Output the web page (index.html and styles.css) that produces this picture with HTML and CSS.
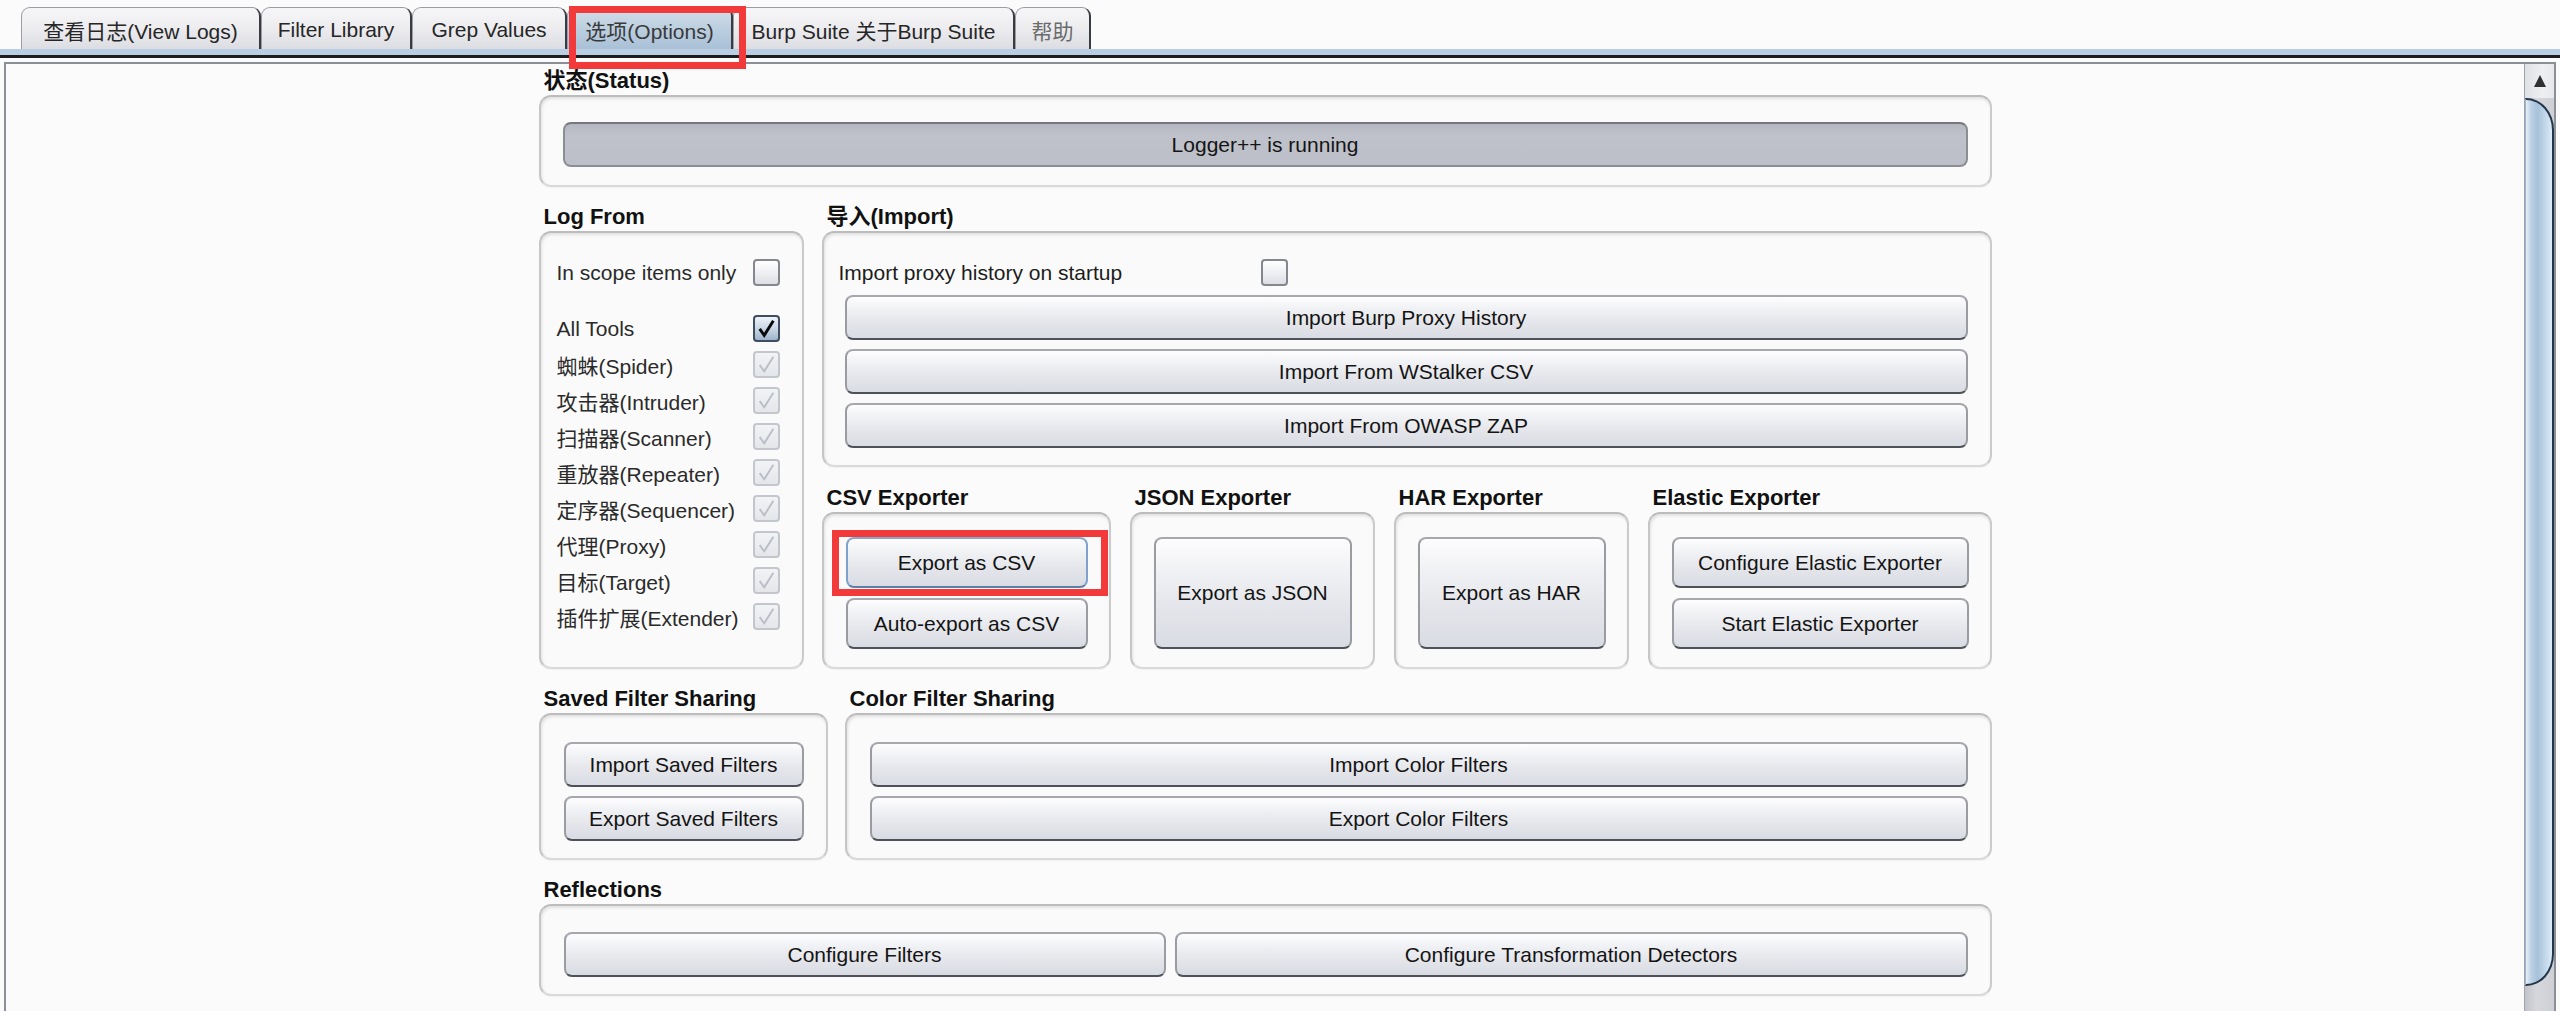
FILE: index.html
```html
<!DOCTYPE html>
<html lang="zh">
<head>
<meta charset="utf-8">
<title>Logger++ Options</title>
<link rel="stylesheet" href="styles.css">
</head>
<body>
<div class="tabbar">
  <div class="tab t1">查看日志(View Logs)</div>
  <div class="tab t2">Filter Library</div>
  <div class="tab t3">Grep Values</div>
  <div class="tab t4 selected">选项(Options)<span class="mark mark-tab"></span></div>
  <div class="tab t5">Burp Suite 关于Burp Suite</div>
  <div class="tab t6">帮助</div>
</div>
<div class="tabline"></div>
<div class="panel">
  <div class="main">
    <div class="layout">
      <section class="group">
        <div class="title">状态(Status)</div>
        <div class="box status-box"><div class="status-bar">Logger++ is running</div></div>
      </section>

      <div class="row2">
        <section class="group logfrom">
          <div class="title">Log From</div>
          <div class="box logfrom-box">
            <div class="opt scope"><span>In scope items only</span><span class="cb"></span></div>
            <div class="opt"><span>All Tools</span><span class="cb checked"><svg viewBox="0 0 23 23"><polyline points="4,12 9,19 19,3"/></svg></span></div>
            <div class="opt"><span>蜘蛛(Spider)</span><span class="cb disabled"><svg viewBox="0 0 23 23"><polyline points="4,12 9,19 19,3"/></svg></span></div>
            <div class="opt"><span>攻击器(Intruder)</span><span class="cb disabled"><svg viewBox="0 0 23 23"><polyline points="4,12 9,19 19,3"/></svg></span></div>
            <div class="opt"><span>扫描器(Scanner)</span><span class="cb disabled"><svg viewBox="0 0 23 23"><polyline points="4,12 9,19 19,3"/></svg></span></div>
            <div class="opt"><span>重放器(Repeater)</span><span class="cb disabled"><svg viewBox="0 0 23 23"><polyline points="4,12 9,19 19,3"/></svg></span></div>
            <div class="opt"><span>定序器(Sequencer)</span><span class="cb disabled"><svg viewBox="0 0 23 23"><polyline points="4,12 9,19 19,3"/></svg></span></div>
            <div class="opt"><span>代理(Proxy)</span><span class="cb disabled"><svg viewBox="0 0 23 23"><polyline points="4,12 9,19 19,3"/></svg></span></div>
            <div class="opt"><span>目标(Target)</span><span class="cb disabled"><svg viewBox="0 0 23 23"><polyline points="4,12 9,19 19,3"/></svg></span></div>
            <div class="opt"><span>插件扩展(Extender)</span><span class="cb disabled"><svg viewBox="0 0 23 23"><polyline points="4,12 9,19 19,3"/></svg></span></div>
          </div>
        </section>

        <div class="rightcol">
          <section class="group">
            <div class="title">导入(Import)</div>
            <div class="box import-box">
              <div class="check-row"><span class="check-label">Import proxy history on startup</span><span class="cb"></span></div>
              <div class="btn">Import Burp Proxy History</div>
              <div class="btn">Import From WStalker CSV</div>
              <div class="btn">Import From OWASP ZAP</div>
            </div>
          </section>

          <div class="exporters">
            <section class="group">
              <div class="title">CSV Exporter</div>
              <div class="box exp-box">
                <div class="btn tall focused">Export as CSV<span class="mark mark-btn"></span></div>
                <div class="btn tall">Auto-export as CSV</div>
              </div>
            </section>
            <section class="group">
              <div class="title">JSON Exporter</div>
              <div class="box exp-box"><div class="btn fill">Export as JSON</div></div>
            </section>
            <section class="group">
              <div class="title">HAR Exporter</div>
              <div class="box exp-box"><div class="btn fill">Export as HAR</div></div>
            </section>
            <section class="group">
              <div class="title">Elastic Exporter</div>
              <div class="box exp-box">
                <div class="btn tall">Configure Elastic Exporter</div>
                <div class="btn tall">Start Elastic Exporter</div>
              </div>
            </section>
          </div>
        </div>
      </div>

      <div class="row3">
        <section class="group">
          <div class="title">Saved Filter Sharing</div>
          <div class="box share-box">
            <div class="btn">Import Saved Filters</div>
            <div class="btn">Export Saved Filters</div>
          </div>
        </section>
        <section class="group">
          <div class="title">Color Filter Sharing</div>
          <div class="box share-box">
            <div class="btn">Import Color Filters</div>
            <div class="btn">Export Color Filters</div>
          </div>
        </section>
      </div>

      <section class="group">
        <div class="title">Reflections</div>
        <div class="box refl-box">
          <div class="btn">Configure Filters</div>
          <div class="btn">Configure Transformation Detectors</div>
        </div>
      </section>
    </div>
  </div>
  <div class="scrollbar">
    <div class="sb-up"></div>
    <div class="sb-thumb"></div>
  </div>
</div>
</body>
</html>
```

FILE: styles.css
```css
html, body {
  margin: 0;
  padding: 0;
}
body {
  width: 2560px;
  height: 1011px;
  overflow: hidden;
  background: #fbfbfb;
  font-family: "Liberation Sans", "Noto Sans CJK SC", sans-serif;
  font-size: 21px;
  color: #1c1c1c;
  display: flex;
  flex-direction: column;
}

/* ---------- tabs ---------- */
.tabbar {
  display: flex;
  padding: 7px 0 0 21px;
  height: 42px;
  flex: none;
}
.tab {
  position: relative;
  box-sizing: border-box;
  height: 42px;
  padding-top: 3px;
  display: flex;
  align-items: center;
  justify-content: center;
  white-space: nowrap;
  border: 1px solid #9c9da3;
  border-bottom: none;
  border-right: 2px solid #3a3b40;
  border-radius: 9px 9px 0 0;
  background: linear-gradient(180deg, #f6f6f8 0%, #eeeef1 45%, #dcdde2 100%);
  color: #262626;
}
.t1 { width: 240px; }
.t2 { width: 151px; }
.t3 { width: 155px; }
.t4 { width: 166px; }
.t5 { width: 282px; }
.t6 { width: 76px; color: #6a6a6a; }
.tab.selected {
  background: linear-gradient(180deg, #d3dee9 0%, #bccfe0 50%, #a9c0d6 100%);
  border-color: #8fa3b8;
  border-right: 2px solid #3a3b40;
  color: #3a3a3a;
}
.tabline {
  flex: none;
  height: 6px;
  background: #b9cee2;
  border-bottom: 3px solid #1d1d1f;
}

/* annotation overlays */
.mark {
  position: absolute;
  box-sizing: border-box;
  border: 7px solid #f23a3a;
  z-index: 10;
  pointer-events: none;
}
.mark-tab {
  left: 1px;
  top: -2px;
  width: 177px;
  height: 63px;
}
.mark-btn {
  left: -16px;
  top: -9px;
  right: -22px;
  bottom: -10px;
}

/* ---------- panel ---------- */
.panel {
  flex: 1;
  display: flex;
  margin: 4px 4px 0 4px;
  border: 2px solid #8d8f97;
  border-bottom: none;
  background: #fbfbfb;
  min-height: 0;
}
.main {
  flex: 1;
  display: flex;
  justify-content: center;
}
.layout {
  width: 1453px;
  padding-top: 1px;
  display: flex;
  flex-direction: column;
  gap: 14px;
}

.group {
  display: flex;
  flex-direction: column;
}
.title {
  height: 30px;
  line-height: 32px;
  font-weight: bold;
  font-size: 22px;
  padding-left: 5px;
  color: #111;
  white-space: nowrap;
}
.box {
  box-sizing: border-box;
  border: 2px solid #cacaca;
  border-color: #bcbcbc #cbcbcb #dadada #c6c6c6;
  border-radius: 12px;
  background: #fafafa;
  box-shadow: inset 1px 2px 3px rgba(0, 0, 0, 0.10), 0 1px 1px rgba(0, 0, 0, 0.04);
}

/* status */
.status-box {
  padding: 25px 22px 18px 22px;
}
.status-bar {
  box-sizing: border-box;
  height: 45px;
  border: 2px solid #8c8e95;
  border-top-color: #76787e;
  border-radius: 8px;
  background: linear-gradient(180deg, #b5b8c0 0%, #bfc2ca 30%, #bcbfc7 100%);
  display: flex;
  align-items: center;
  justify-content: center;
  color: #151515;
}

/* row 2 */
.row2 {
  display: flex;
  gap: 18px;
}
.logfrom {
  width: 265px;
  flex: none;
}
.logfrom-box {
  flex: 1;
  padding: 26px 22px 0 16px;
  display: flex;
  flex-direction: column;
  gap: 9px;
}
.opt {
  height: 27px;
  display: flex;
  align-items: center;
  justify-content: space-between;
  white-space: nowrap;
  color: #2a2a2a;
}
.opt.scope {
  margin-bottom: 20px;
}

.cb {
  box-sizing: border-box;
  width: 27px;
  height: 27px;
  flex: none;
  border: 2px solid #85878e;
  border-radius: 4px;
  background: linear-gradient(180deg, #ffffff 0%, #eff0f3 50%, #dcdee4 100%);
  display: flex;
  align-items: center;
  justify-content: center;
}
.cb svg {
  width: 21px;
  height: 21px;
}
.cb polyline {
  fill: none;
  stroke-width: 3.2;
  stroke-linecap: butt;
  stroke-linejoin: miter;
}
.cb.checked {
  border-color: #3e4e60;
  background: linear-gradient(180deg, #eef3f8 0%, #c9d7e5 50%, #9fb5ca 100%);
}
.cb.checked polyline {
  stroke: #0a0a0a;
}
.cb.disabled {
  border-color: #c3c6cc;
  background: linear-gradient(180deg, #f2f3f5 0%, #e4e6ea 100%);
}
.cb.disabled polyline {
  stroke: #b9bdc5;
  stroke-width: 2;
}

.rightcol {
  flex: 1;
  display: flex;
  flex-direction: column;
  gap: 15px;
}
.import-box {
  padding: 26px 22px 17px 21px;
  display: flex;
  flex-direction: column;
  gap: 9px;
}
.check-row {
  height: 27px;
  display: flex;
  align-items: center;
  margin-left: -6px;
}
.check-label {
  width: 422px;
  white-space: nowrap;
}

.exporters {
  display: grid;
  grid-template-columns: 289px 245px 235px 1fr;
  gap: 19px;
}
.exp-box {
  height: 157px;
  padding: 23px 21px 18px 22px;
  display: flex;
  flex-direction: column;
  gap: 10px;
}

/* buttons */
.btn {
  position: relative;
  box-sizing: border-box;
  height: 45px;
  flex: none;
  border: 2px solid #9b9da3;
  border-color: #a6a8ae #9a9ca2 #4f5159 #9a9ca2;
  border-radius: 8px;
  background: linear-gradient(180deg, #fdfdfe 0%, #f0f1f4 30%, #e3e5ea 65%, #d9dce3 100%);
  display: flex;
  align-items: center;
  justify-content: center;
  white-space: nowrap;
  color: #141414;
}
.btn.tall {
  height: 51px;
}
.btn.fill {
  flex: 1;
}
.btn.focused {
  border-color: #86a9d2 #7fa2cc #5d7fa8 #7fa2cc;
}

/* row 3 */
.row3 {
  display: grid;
  grid-template-columns: 289px 1fr;
  gap: 17px;
}
.share-box {
  padding: 27px 22px 17px 23px;
  display: flex;
  flex-direction: column;
  gap: 9px;
}
.refl-box {
  padding: 26px 22px 17px 23px;
  display: grid;
  grid-template-columns: 602px 1fr;
  gap: 9px;
}

/* scrollbar */
.scrollbar {
  width: 29px;
  flex: none;
  display: flex;
  flex-direction: column;
  border-left: 1px solid #9ea3ab;
  background: linear-gradient(90deg, #c2c3c8 0%, #d6d7dc 40%, #cfd0d5 100%);
}
.sb-up {
  height: 34px;
  flex: none;
  background: linear-gradient(90deg, #e0e1e5 0%, #eeeff1 60%, #e6e7ea 100%);
  display: flex;
  align-items: center;
  justify-content: center;
}
.sb-up::before {
  content: "";
  width: 0;
  height: 0;
  border-left: 6px solid transparent;
  border-right: 6px solid transparent;
  border-bottom: 12px solid #2f3033;
}
.sb-thumb {
  flex: 1;
  margin-bottom: 25px;
  box-sizing: border-box;
  border: 2px solid #22364b;
  border-left: 1px solid #9fb4c8;
  border-radius: 0 28px 28px 0 / 0 32px 32px 0;
  background: linear-gradient(90deg, #e6eef6 0%, #bcd1e4 20%, #a8c2da 45%, #c3d8ea 75%, #dcebf7 100%);
}
```
